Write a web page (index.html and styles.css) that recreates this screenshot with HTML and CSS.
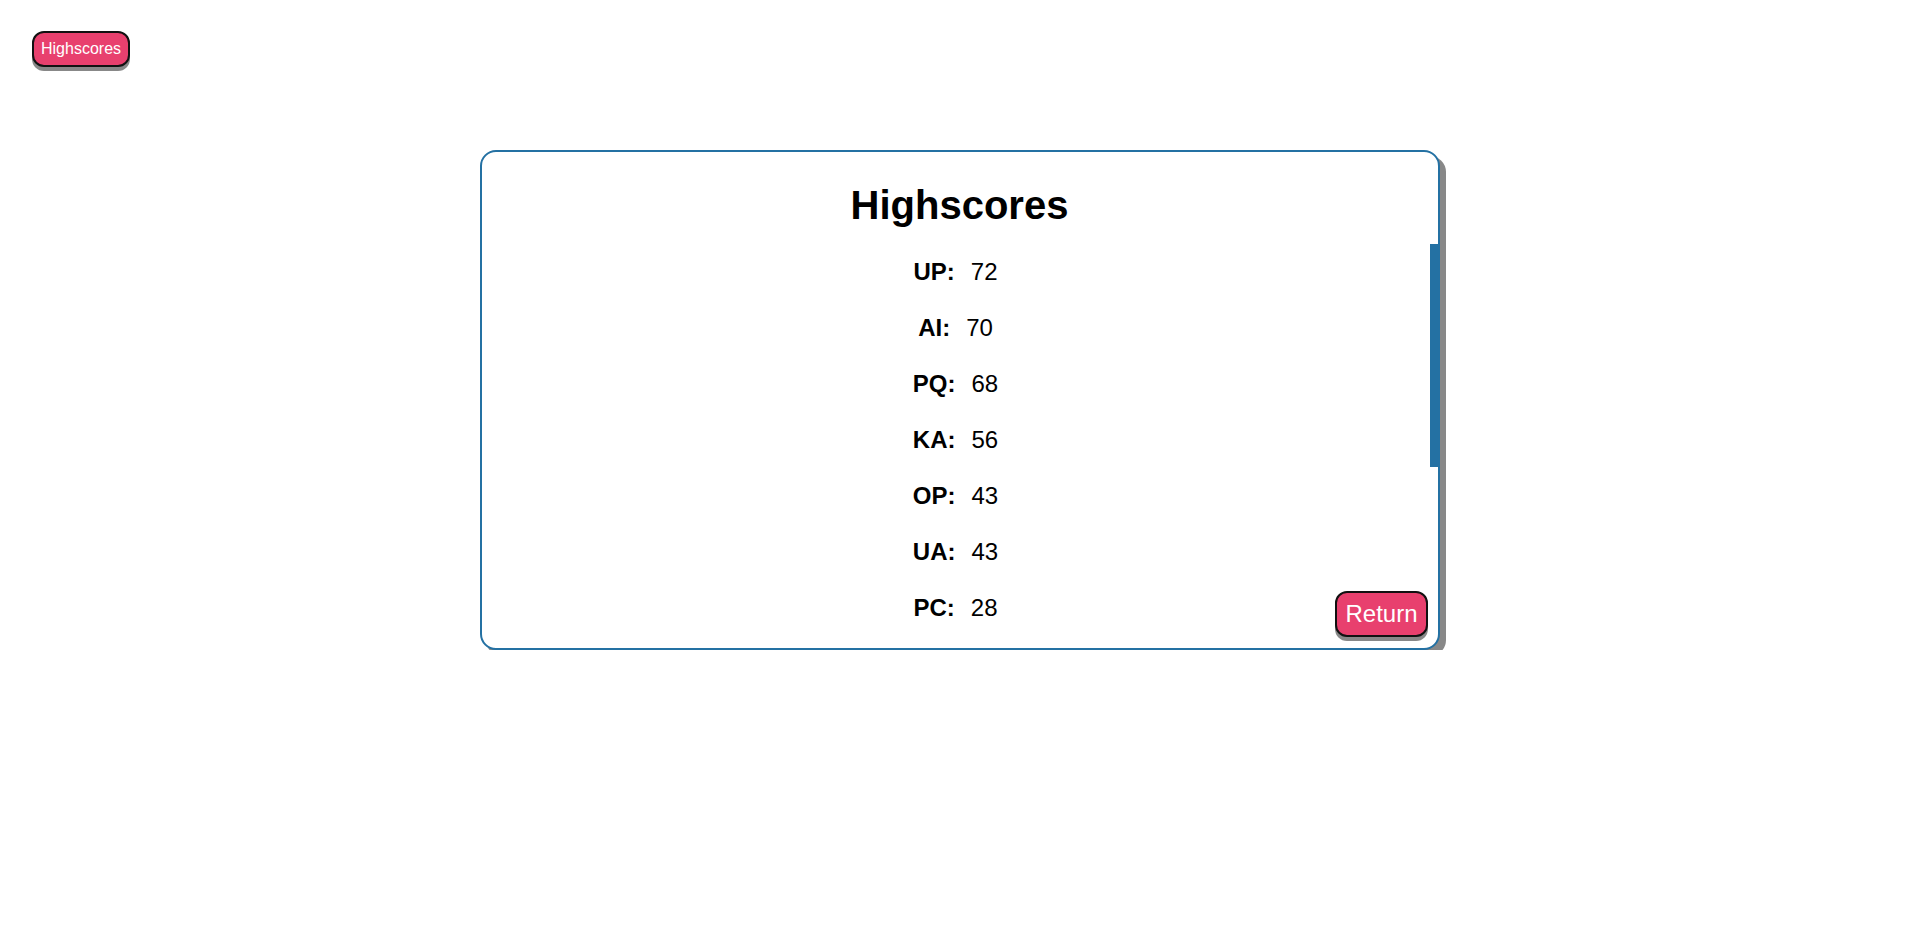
FILE: index.html
```html
<!DOCTYPE html>
<html lang="en">
<head>
<meta charset="utf-8">
<title>Highscores</title>
<link rel="stylesheet" href="styles.css">
</head>
<body>
<header class="topbar">
  <button class="btn btn-small">Highscores</button>
</header>
<main class="card">
  <h1 class="card-title">Highscores</h1>
  <div class="score-area">
    <div class="score-list">
      <div class="score-row"><span class="name">UP:</span><span class="score">72</span></div>
      <div class="score-row"><span class="name">AI:</span><span class="score">70</span></div>
      <div class="score-row"><span class="name">PQ:</span><span class="score">68</span></div>
      <div class="score-row"><span class="name">KA:</span><span class="score">56</span></div>
      <div class="score-row"><span class="name">OP:</span><span class="score">43</span></div>
      <div class="score-row"><span class="name">UA:</span><span class="score">43</span></div>
      <div class="score-row"><span class="name">PC:</span><span class="score">28</span></div>
    </div>
    <div class="scrollbar"><div class="scrollbar-thumb"></div></div>
  </div>
  <button class="btn btn-return">Return</button>
</main>
</body>
</html>
```

FILE: styles.css
```css
* { box-sizing: border-box; }

html, body {
  margin: 0;
  padding: 0;
  background: #ffffff;
  font-family: "Liberation Sans", Arial, sans-serif;
  color: #000;
}

.topbar {
  display: flex;
  padding: 31px 0 0 32px;
}

.btn {
  font-family: "Liberation Sans", Arial, sans-serif;
  background: #e8406e;
  color: #ffffff;
  border: 2px solid #111;
  cursor: pointer;
  box-shadow: 0 4px 0 #888888;
  line-height: normal;
}

.btn-small {
  font-size: 16px;
  padding: 7px 7px;
  border-radius: 12px;
}

.card {
  position: relative;
  width: 960px;
  height: 500px;
  margin: 83px auto 0;
  border: 2px solid #2471a3;
  border-radius: 16px;
  box-shadow: 6px 6px 0 #888888;
  background: #fff;
  display: flex;
  flex-direction: column;
}

.card-title {
  margin: 31px 0 16px;
  text-align: center;
  font-size: 40px;
  font-weight: bold;
  line-height: normal;
}

.score-area {
  flex: 1;
  min-height: 0;
  display: flex;
}

.score-list {
  flex: 1;
  min-width: 0;
  overflow: hidden;
}

.scrollbar {
  width: 8px;
  flex: none;
}

.scrollbar-thumb {
  height: 223px;
  background: #2471a3;
}

.score-row {
  height: 56px;
  display: flex;
  align-items: center;
  justify-content: center;
  gap: 16px;
  font-size: 24px;
}

.name { font-weight: bold; }

.btn-return {
  position: absolute;
  right: 10px;
  bottom: 11px;
  font-size: 24px;
  padding: 7px 8px;
  border-radius: 12px;
}
```
